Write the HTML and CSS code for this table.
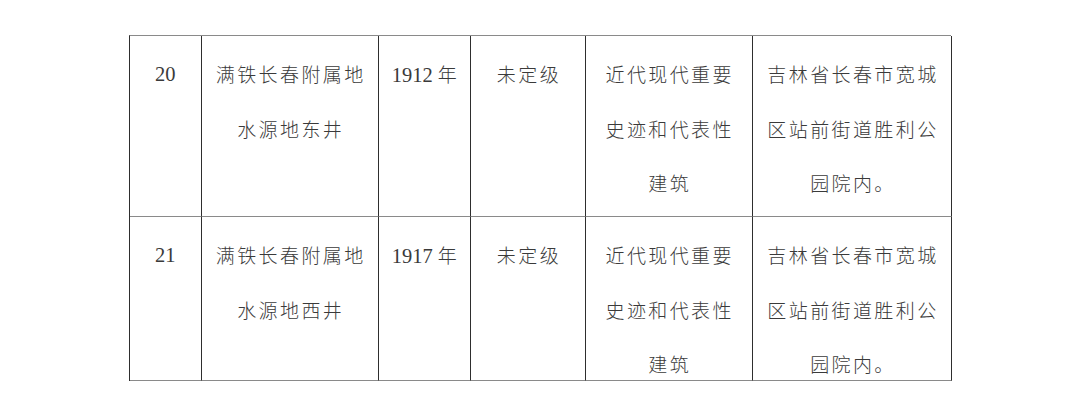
FILE: index.html
```html
<!DOCTYPE html>
<html lang="zh-CN">
<head>
<meta charset="utf-8">
<title>表格</title>
<link rel="stylesheet" href="styles.css">
</head>
<body>
<div class="sheet">
  <div class="cell num">20</div>
  <div class="cell cjk">满铁长春附属地<br>水源地东井</div>
  <div class="cell num">1912 <span class="cj">年</span></div>
  <div class="cell cjk">未定级</div>
  <div class="cell cjk">近代现代重要<br>史迹和代表性<br>建筑</div>
  <div class="cell cjk">吉林省长春市宽城<br>区站前街道胜利公<br>园院内。</div>

  <div class="cell num">21</div>
  <div class="cell cjk">满铁长春附属地<br>水源地西井</div>
  <div class="cell num">1917 <span class="cj">年</span></div>
  <div class="cell cjk">未定级</div>
  <div class="cell cjk">近代现代重要<br>史迹和代表性<br>建筑</div>
  <div class="cell cjk">吉林省长春市宽城<br>区站前街道胜利公<br>园院内。</div>
</div>
</body>
</html>
```

FILE: styles.css
```css
html, body {
  margin: 0;
  padding: 0;
  background: #ffffff;
}

body {
  padding-top: 35px;
  padding-left: 129px;
}

.sheet {
  display: grid;
  width: 822px;
  grid-template-columns: 71.5px 177px 92.5px 114.5px 167px 199.5px;
  grid-template-rows: 181px 164px;
  border-top: 1px solid #8a8a8a;
  border-left: 1px solid #2e2e2e;
  box-sizing: border-box;
}

.cell {
  border-right: 1px solid #2e2e2e;
  border-bottom: 1.5px solid #8a8a8a;
  padding-top: 11px;
  line-height: 54.5px;
  text-align: center;
  color: #3a3a3a;
  overflow: visible;
  white-space: nowrap;
}

.cjk {
  font-family: "Noto Sans CJK SC", "Noto Sans CJK JP", sans-serif;
  font-weight: 300;
  font-size: 19px;
  letter-spacing: 2.4px;
  padding-left: 2.4px;
}

.num {
  font-family: "Liberation Serif", "Noto Sans CJK SC", serif;
  font-size: 20.5px;
  color: #3a3a3a;
}

.cj {
  font-family: "Noto Sans CJK SC", sans-serif;
  font-weight: 300;
  font-size: 19px;
  color: #3a3a3a;
}
```
